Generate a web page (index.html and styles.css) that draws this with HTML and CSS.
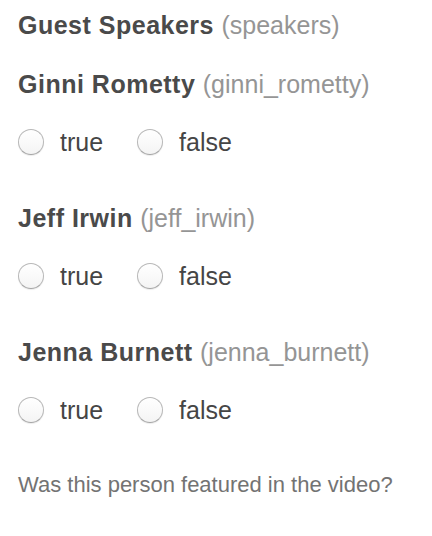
FILE: index.html
```html
<!DOCTYPE html>
<html lang="en">
<head>
    <meta charset="UTF-8">
    <meta name="viewport" content="width=device-width, initial-scale=1.0">
    <title>Guest Speakers</title>
    <link rel="stylesheet" href="styles.css">
</head>
<body>
    <form class="speakers">
        <h2 class="titulo">Guest Speakers <span class="clave">(speakers)</span></h2>

        <div class="campo">
            <div class="nombre">Ginni Rometty <span class="clave">(ginni_rometty)</span></div>
            <div class="opciones">
                <label class="opcion"><input type="radio" name="ginni_rometty" value="true"> true</label>
                <label class="opcion"><input type="radio" name="ginni_rometty" value="false"> false</label>
            </div>
        </div>

        <div class="campo">
            <div class="nombre">Jeff Irwin <span class="clave">(jeff_irwin)</span></div>
            <div class="opciones">
                <label class="opcion"><input type="radio" name="jeff_irwin" value="true"> true</label>
                <label class="opcion"><input type="radio" name="jeff_irwin" value="false"> false</label>
            </div>
        </div>

        <div class="campo">
            <div class="nombre">Jenna Burnett <span class="clave">(jenna_burnett)</span></div>
            <div class="opciones">
                <label class="opcion"><input type="radio" name="jenna_burnett" value="true"> true</label>
                <label class="opcion"><input type="radio" name="jenna_burnett" value="false"> false</label>
            </div>
        </div>

        <p class="ayuda">Was this person featured in the video?</p>
    </form>
</body>
</html>
```

FILE: styles.css
```css
body {
    font-family: "Liberation Sans", Arial, sans-serif;
    background-color: #fff;
    color: #444;
    margin: 0;
    padding: 0;
}
.speakers {
    padding: 10px 18px 0;
}
.titulo, .nombre {
    font-size: 25px;
    line-height: 30px;
    font-weight: bold;
    color: #4a4a4a;
    letter-spacing: 0.5px;
}
.titulo {
    margin: 0 0 29px;
}
.nombre {
    margin-bottom: 28px;
}
.clave {
    font-weight: normal;
    color: #959595;
    letter-spacing: 0;
}
.campo {
    margin-bottom: 46px;
}
.opciones {
    display: flex;
    gap: 34px;
    height: 30px;
    align-items: center;
}
.opcion {
    display: flex;
    align-items: center;
    gap: 16px;
    font-size: 25px;
    line-height: 30px;
    color: #454545;
}
.opcion input {
    appearance: none;
    -webkit-appearance: none;
    margin: 0;
    width: 26px;
    height: 26px;
    border-radius: 50%;
    border: 1px solid #b8b8b8;
    border-bottom-color: #a5a5a5;
    background: linear-gradient(#fff, #f4f4f4);
    box-shadow: 0 1px 1px rgba(0, 0, 0, 0.08);
}
.ayuda {
    margin: 0;
    font-size: 22px;
    line-height: 28px;
    color: #737373;
}
```
